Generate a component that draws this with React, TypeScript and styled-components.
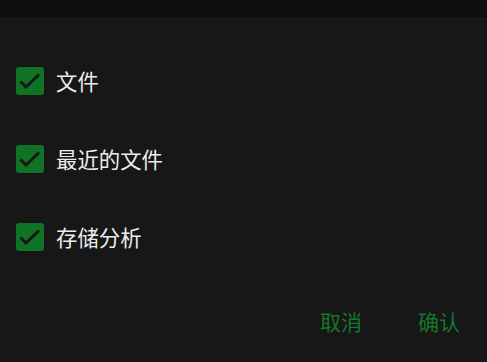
import React from "react";
import styled, { createGlobalStyle } from "styled-components";

const Global = createGlobalStyle`
  html, body { margin: 0; padding: 0; background: #171717; }
  body { font-family: "Noto Sans CJK SC", "Noto Sans", sans-serif; }
`;

const Page = styled.div`
  width: 487px;
  height: 362px;
  background: #171717;
  display: flex;
  flex-direction: column;
  overflow: hidden;
`;

const TopBar = styled.div`
  height: 17px;
  background: #0f0f0f;
  flex-shrink: 0;
`;

const List = styled.div`
  display: flex;
  flex-direction: column;
  padding-top: 25px;
`;

const Row = styled.label`
  height: 78px;
  display: flex;
  align-items: center;
  padding-left: 16px;
  gap: 12px;
`;

const Box = styled.span`
  width: 28px;
  height: 28px;
  border-radius: 3px;
  background: #0f7224;
  display: flex;
  align-items: center;
  justify-content: center;
  flex-shrink: 0;
`;

const Label = styled.span`
  color: #ececec;
  font-size: 21.4px;
  line-height: 24px;
`;

const Actions = styled.div`
  display: flex;
  justify-content: flex-end;
  padding-right: 27px;
  margin-top: 21px;
  gap: 56px;
`;

const ActionButton = styled.button`
  background: none;
  border: none;
  padding: 0;
  height: 48px;
  color: #13782a;
  font-family: "Noto Sans CJK SC", "Noto Sans", sans-serif;
  font-size: 21px;
  line-height: 24px;
  cursor: pointer;
`;

const Check = () => (
  <svg width="28" height="28" viewBox="0 0 28 28">
    <path d="M4.5 14.5 L10 20 L23 7.5" fill="none" stroke="#171717" strokeWidth="3" />
  </svg>
);

const items = ["文件", "最近的文件", "存储分析"];

export default function App() {
  return (
    <Page>
      <Global />
      <TopBar />
      <List>
        {items.map((t) => (
          <Row key={t}>
            <Box>
              <Check />
            </Box>
            <Label>{t}</Label>
          </Row>
        ))}
      </List>
      <Actions>
        <ActionButton>取消</ActionButton>
        <ActionButton>确认</ActionButton>
      </Actions>
    </Page>
  );
}
